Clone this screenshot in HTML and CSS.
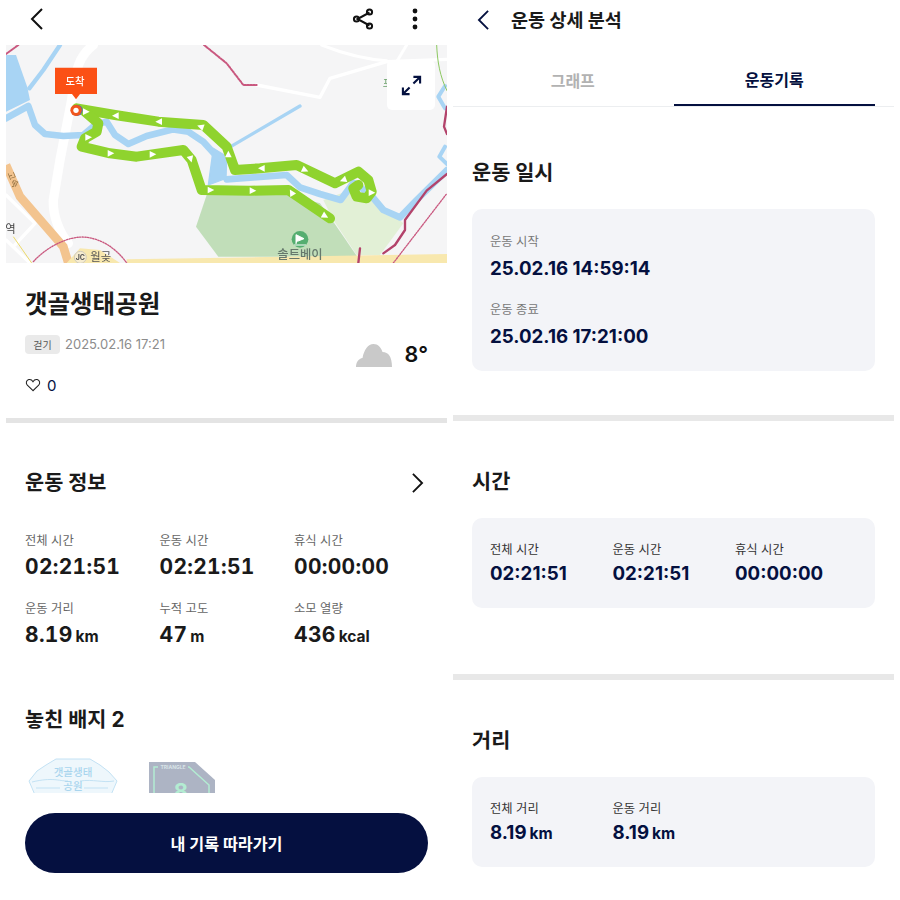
FILE: index.html
```html
<!DOCTYPE html>
<html lang="ko">
<head>
<meta charset="utf-8">
<title>운동 기록</title>
<link rel="stylesheet" href="styles.css">
</head>
<body>
<div class="screens">
  <section class="screen left">
    <header class="topbar">
      <svg class="ico back" viewBox="0 0 24 24"><path d="M17 2 7 12l10 10"/></svg>
      <div class="topactions">
        <svg class="share" viewBox="0 0 24 24"><path d="M18.500 5.500 6.500 12l12 6.500"/><circle cx="18.500" cy="5" r="2.600"/><circle cx="5.500" cy="12" r="2.600"/><circle cx="18.500" cy="19" r="2.600"/></svg>
        <svg class="more" viewBox="0 0 6 22"><circle cx="3" cy="3" r="2.400"/><circle cx="3" cy="11" r="2.400"/><circle cx="3" cy="19" r="2.400"/></svg>
      </div>
    </header>
    <div class="map">
      <svg class="mapsvg" viewBox="18 135 1323 654">
        <defs><path id="t" d="M-9-10 11 0-9 10Z"/></defs>
        <rect x="18" y="135" width="1323" height="654" fill="#f5f5f6"/>
        <path d="M970 600 1050 570 1120 590 1210 670 1140 765H1070L1000 660Z" fill="#e2f0d6"/>
        <path d="M620 585 588 680 655 770H1072L1000 665 960 610 870 585Z" fill="#c1deb9"/>
        <g fill="none" stroke="#fff" stroke-linecap="round" stroke-linejoin="round">
          <path d="M280 135C240 165 225 205 215 300L180 480 160 600C158 650 180 700 205 730" stroke-width="28"/>
          <path d="M770 255 960 292 990 235 1160 185 1341 178" stroke-width="10"/>
          <path d="M965 135C1040 165 1100 178 1160 182M1220 135 1190 185" stroke-width="9"/>
          <path d="M18 585 105 670 40 740M18 720 90 789" stroke-width="10"/>
        </g>
        <g fill="none" stroke="#a8d4f4" stroke-linecap="round" stroke-linejoin="round">
          <path d="M18 355 85 318 105 375 135 402 190 408 250 405 285 375 320 365 345 405 385 432 440 408 520 388 565 395 610 425 660 480M680 538 760 532 860 525 900 562 960 582 1022 600 1060 548 1110 582 1150 630 1200 652 1250 600 1341 510" stroke-width="20"/>
          <path d="M180 135 130 210 88 265" stroke-width="13"/>
          <path d="M692 440 900 318" stroke-width="10"/>
          <path d="M18 165H48L82 262 90 300 18 335Z" fill="#a8d4f4" stroke="none"/>
          <path d="M640 445 680 470 678 535 625 555Z" fill="#a8d4f4" stroke-width="4"/>
          <path d="M1335 258 1315 290 1335 325M1341 492 1318 470 1335 440" stroke-width="12"/>
        </g>
        <path d="M18 495 60 590 190 740 205 789" fill="none" stroke="#f3c48f" stroke-width="26"/>
        <path d="M380 789V778L1341 762V789Z" fill="#f8e8ae"/>
        <path d="M200 789 240 745 300 750 360 789Z" fill="#f8e8ae"/>
        <path d="M40 710 95 789" fill="none" stroke="#ecd968" stroke-width="3"/>
        <g fill="none" stroke-linecap="round" stroke-linejoin="round">
          <path d="M1341 522 1280 572 1215 660V690L1185 735 1150 760M1341 320 1332 380 1341 402M1080 745 1075 789" stroke="#b3436b" stroke-width="7"/>
          <path d="M612 135 680 190 730 255H770M18 162 55 135" stroke="#c9587f" stroke-width="6" stroke-dasharray="5 4"/>
          <path d="M100 785C140 740 210 705 260 712 320 720 360 760 380 789M1180 789 1341 580" stroke="#c9587f" stroke-width="4" stroke-dasharray="4 4"/>
          <path d="M1310 135C1312 185 1320 230 1341 272" stroke="#8cc860" stroke-width="3"/>
        </g>
        <g class="route">
          <path d="M230 325 345 345 475 365 610 375 680 440 705 510 780 505 890 495 1005 550 1075 515 1105 540 1115 575 1100 595 1070 590 1060 565 1075 555"/>
          <path d="M255 335 295 370 290 395 255 415 245 440 330 460 410 470 550 450 575 480 605 570 750 572 865 570 990 655"/>
        </g>
        <g fill="#fff">
          <use href="#t" transform="translate(258 335)"/>
          <use href="#t" transform="translate(347 347) rotate(180)"/>
          <use href="#t" transform="translate(477 365) rotate(180)"/>
          <use href="#t" transform="translate(602 380) rotate(200)"/>
          <use href="#t" transform="translate(685 463) rotate(270)"/>
          <use href="#t" transform="translate(785 505) rotate(180)"/>
          <use href="#t" transform="translate(915 510) rotate(25)"/>
          <use href="#t" transform="translate(1030 540) rotate(160)"/>
          <use href="#t" transform="translate(1115 578)"/>
          <use href="#t" transform="translate(265 412)"/>
          <use href="#t" transform="translate(332 460)"/>
          <use href="#t" transform="translate(458 463)"/>
          <use href="#t" transform="translate(572 477) rotate(75)"/>
          <use href="#t" transform="translate(632 570)"/>
          <use href="#t" transform="translate(758 572)"/>
          <use href="#t" transform="translate(875 578) rotate(240)"/>
          <use href="#t" transform="translate(975 648) rotate(30)"/>
        </g>
        <circle cx="231" cy="331" r="17" fill="#4f6fb0"/>
        <circle cx="228" cy="331" r="17" fill="#f0561d"/>
        <circle cx="228" cy="331" r="8" fill="#fff"/>
        <path d="M165 203H291V282H240L228 298 216 282H165Z" fill="#fb5015"/>
        <text class="flagtext" x="225" y="254">도착</text>
        <circle cx="900" cy="718" r="25" fill="#55ae70"/>
        <path d="M888 732V704L912 716 892 724M882 735H918" fill="#fff" stroke="#fff" stroke-width="3"/>
        <text class="placelabel" x="900" y="778">솔트베이</text>
        <circle cx="241" cy="772" r="18" fill="#f6eccf" stroke="#bbb" stroke-width="2"/>
        <text class="jc" x="241" y="780">JC</text>
        <text class="wollgot" x="302" y="783">월곶</text>
        <text class="sidelabel" x="16" y="700">역</text>
        <text class="hwlabel" transform="translate(22 520) rotate(68)">고속</text>
        <text class="parklabel" x="1148" y="262">포</text>
      </svg>
      <button class="expand" type="button" aria-label="전체 화면">
        <svg viewBox="0 0 22 22"><path d="M2 20 9 13M2 13V20H9M20 2 13 9M13 2H20V9"/></svg>
      </button>
    </div>
    <div class="summary">
      <h1>갯골생태공원</h1>
      <div class="summaryrow">
        <div>
          <div class="meta"><span class="chip">걷기</span><span class="date">2025.02.16 17:21</span></div>
          <div class="likes">
            <svg viewBox="0 0 18 16"><path d="M9 14.500 2.500 8.200C.5 6 1.200 2.500 4.200 1.800 6.200 1.400 8 2.500 9 4.200 10 2.500 11.800 1.400 13.800 1.800 16.800 2.500 17.500 6 15.500 8.200Z"/></svg>
            <span>0</span>
          </div>
        </div>
        <div class="weather">
          <svg viewBox="0 0 36 26"><path d="M0 25C0 20 3 16.500 6.500 16 8 8 12 2 17.500 2 22 2 25 5.500 26.500 10 32.500 10 36 15 36 25Z"/></svg>
          <span>8°</span>
        </div>
      </div>
    </div>
    <div class="divider"></div>
    <div class="info">
      <div class="infohead"><h2>운동 정보</h2>
        <svg viewBox="0 0 14 24"><path d="M2 2 12 12 2 22"/></svg></div>
      <div class="statgrid">
        <div class="stat"><span class="label">전체 시간</span><strong>02:21:51</strong></div>
        <div class="stat"><span class="label">운동 시간</span><strong>02:21:51</strong></div>
        <div class="stat"><span class="label">휴식 시간</span><strong>00:00:00</strong></div>
        <div class="stat"><span class="label">운동 거리</span><strong>8.19<small>km</small></strong></div>
        <div class="stat"><span class="label">누적 고도</span><strong>47<small>m</small></strong></div>
        <div class="stat"><span class="label">소모 열량</span><strong>436<small>kcal</small></strong></div>
      </div>
      <h2 class="badgehead">놓친 배지 2</h2>
      <div class="badges">
        <svg class="badge1" viewBox="0 0 90 36">
          <path d="M1 24 9 14 18 8 28 2H62L72 8 81 15 89 24 83 38H7Z" fill="#eef7fc" stroke="#c3e2f4"/>
          <path d="M4 25C25 20 30 24 40 24M52 24C65 22 75 26 86 24M8 31H32M56 31H80" fill="none" stroke="#c3e2f4"/>
          <text x="45" y="19">갯골생태</text>
          <text x="45" y="33">공원</text>
        </svg>
        <svg class="badge2" viewBox="0 0 66 31">
          <path d="M0 0H46L66 18V31H0Z" fill="#adb4c4"/>
          <path d="M5 31V5H40L60 23V31" fill="none" stroke="#b3ecd2" stroke-width="1.500"/>
          <rect x="9" y="2" width="30" height="6" fill="#adb4c4"/>
          <text class="tri" x="24" y="7">TRIANGLE</text>
          <text class="eight" x="32" y="37">8</text>
        </svg>
      </div>
    </div>
    <button class="cta" type="button">내 기록 따라가기</button>
  </section>
  <section class="screen right">
    <header class="detailbar">
      <svg viewBox="0 0 14 24"><path d="M12 2 2 12 12 22"/></svg>
      <h2>운동 상세 분석</h2>
    </header>
    <nav class="tabs">
      <a class="tab">그래프</a>
      <a class="tab active">운동기록</a>
    </nav>
    <div class="block first">
      <h3>운동 일시</h3>
      <div class="card stack">
        <div class="cell"><span class="label">운동 시작</span><strong>25.02.16 14:59:14</strong></div>
        <div class="cell"><span class="label">운동 종료</span><strong>25.02.16 17:21:00</strong></div>
      </div>
    </div>
    <div class="divider"></div>
    <div class="block">
      <h3>시간</h3>
      <div class="card row">
        <div class="cell"><span class="label">전체 시간</span><strong>02:21:51</strong></div>
        <div class="cell"><span class="label">운동 시간</span><strong>02:21:51</strong></div>
        <div class="cell"><span class="label">휴식 시간</span><strong>00:00:00</strong></div>
      </div>
    </div>
    <div class="divider"></div>
    <div class="block">
      <h3>거리</h3>
      <div class="card row">
        <div class="cell"><span class="label">전체 거리</span><strong>8.19<small>km</small></strong></div>
        <div class="cell"><span class="label">운동 거리</span><strong>8.19<small>km</small></strong></div>
      </div>
    </div>
  </section>
</div>
</body>
</html>
```
FILE: styles.css
```css
* { box-sizing: border-box; }
html, body { margin: 0; padding: 0; background: #fff; }
body { font-family: Inter, "Noto Sans CJK KR", sans-serif; color: #111; width: 900px; height: 900px; overflow: hidden; }
h1, h2, h3 { margin: 0; }
.screens { display: flex; gap: 6px; padding: 0 6px; height: 900px; }
.screen { width: 441px; height: 900px; position: relative; overflow: hidden; flex: none; }

.topbar { height: 45px; display: flex; align-items: center; justify-content: space-between; padding: 0 29px 7px 19px; }
.topbar svg { fill: none; stroke: #111; }
.back { width: 24px; height: 26px; stroke-width: 2; }
.topactions { display: flex; align-items: center; gap: 37px; }
.share { width: 24px; height: 24px; stroke-width: 2; }
.topbar .more { width: 6px; height: 22px; fill: #111; stroke: none; }

.map { height: 218px; position: relative; }
.mapsvg { display: block; width: 441px; height: 218px; filter: blur(.35px); }
.route { fill: none; stroke: #8fd32e; stroke-width: 30; stroke-linecap: round; stroke-linejoin: round; }
.flagtext { font-size: 31px; fill: #fff; text-anchor: middle; font-weight: 500; }
.placelabel { font-size: 37px; fill: #66786c; text-anchor: middle; font-weight: 500; }
.wollgot { font-size: 34px; fill: #555; text-anchor: middle; }
.jc { font-size: 21px; fill: #555; text-anchor: middle; font-weight: 700; }
.sidelabel { font-size: 34px; fill: #444; }
.hwlabel { font-size: 26px; fill: #8a6a3c; }
.parklabel { font-size: 30px; fill: #6aa06a; }
.expand { position: absolute; right: 12px; top: 15px; width: 48px; height: 50px; border: 0; border-radius: 5px; background: #fff; padding: 0; display: flex; align-items: center; justify-content: center; }
.expand svg { width: 21px; height: 21px; fill: none; stroke: #04103f; stroke-width: 2.200; }

.summary { padding: 24px 19px 0; height: 155px; }
h1 { font-size: 24.500px; line-height: 34px; font-weight: 700; color: #1a1a1a; }
.summaryrow { display: flex; justify-content: space-between; margin-top: 13px; }
.meta { display: flex; align-items: center; gap: 5px; height: 20px; }
.chip { background: #eaeaea; color: #555; font-size: 10px; border-radius: 4px; height: 19px; width: 35px; display: flex; align-items: center; justify-content: center; }
.date { color: #8c8c8c; font-size: 13px; }
.likes { display: flex; align-items: center; gap: 6px; margin-top: 21px; font-size: 15px; color: #04103f; height: 20px; }
.likes svg { width: 16px; height: 14px; fill: none; stroke: #222; stroke-width: 1.200; }
.weather { display: flex; align-items: center; gap: 13px; font-size: 21.500px; font-weight: 600; color: #111; margin-top: 4px; height: 32px; }
.weather svg { width: 36px; height: 26px; fill: #c9c9c9; margin-top: 2px; }
.divider { height: 6px; background: #e8e8e8; }
.left .divider { height: 5px; background: #e4e4e4; }

.info { padding: 44px 19px 0; }
.infohead { display: flex; justify-content: space-between; align-items: center; height: 32px; padding-right: 4px; }
h2 { font-size: 20.800px; line-height: 32px; font-weight: 700; color: #1a1a1a; }
.infohead svg { width: 13px; height: 22px; fill: none; stroke: #111; stroke-width: 2; }
.statgrid { display: grid; grid-template-columns: 134.500px 134.500px 1fr; row-gap: 19px; margin-top: 33px; }
.stat { display: flex; flex-direction: column; gap: 3px; }
.label { font-size: 12.300px; line-height: 18px; color: #666; }
.stat strong { font-size: 21px; line-height: 28px; font-weight: 700; color: #1a1a1a; font-feature-settings: "tnum"; letter-spacing: .3px; }
strong small { font-size: 15.500px; font-weight: 700; margin-left: 3px; letter-spacing: 0; }
.badgehead { margin-top: 53px; }
.badges { display: flex; align-items: flex-end; gap: 31px; margin-top: 21px; height: 36px; overflow: hidden; padding-left: 3px; }
.badge1 { width: 90px; height: 36px; flex: none; }
.badge1 text { font-size: 10.500px; fill: #a9d5ee; text-anchor: middle; font-weight: 500; }
.badge2 { width: 66px; height: 31px; flex: none; }
.tri { font-size: 5px; fill: #d9e4e8; text-anchor: middle; font-weight: 700; }
.eight { font-size: 22px; fill: #b3ecd2; text-anchor: middle; font-weight: 700; }
.cta { position: absolute; left: 19px; top: 813px; width: 403px; height: 60px; border: 0; border-radius: 30px; background: #051040; color: #fff; font: 700 16.200px Inter, "Noto Sans CJK KR", sans-serif; }

.detailbar { height: 40px; display: flex; align-items: center; gap: 21px; padding-left: 24px; }
.detailbar svg { width: 13px; height: 22px; fill: none; stroke: #04103f; stroke-width: 2; flex: none; }
.detailbar h2 { font-size: 18.500px; line-height: 40px; }
.tabs { display: flex; height: 67px; border-bottom: 1px solid #eceef0; padding: 0 19px; }
.tab { flex: 1 1 0; display: flex; align-items: center; justify-content: center; padding-top: 14px; font-size: 16px; font-weight: 700; color: #b2b2b2; height: 66px; }
.tab.active { color: #04103f; border-bottom: 2.500px solid #04103f; }
.block { padding: 45px 19px 0; height: 253px; }
.block.first { height: 308px; padding-top: 50px; }
.block:last-child { height: auto; }
h3 { font-size: 20.800px; line-height: 32px; font-weight: 700; color: #1a1a1a; }
.card { background: #f3f4f8; border-radius: 10px; margin-top: 20px; }
.card.stack { height: 162px; padding: 24px 18px 0; display: flex; flex-direction: column; gap: 18px; }
.card.row { height: 90px; padding: 23px 18px 0; display: grid; grid-template-columns: 122.500px 122.500px 1fr; }
.cell { display: flex; flex-direction: column; }
.card.stack .cell { gap: 4px; }
.card.stack .label { color: #777; }
.card.row .cell { gap: 1px; }
.cell .label { color: #333; }
.cell strong { font-size: 18.700px; line-height: 28px; font-weight: 700; color: #04103f; }
.cell strong small { font-size: 15.500px; }
```
